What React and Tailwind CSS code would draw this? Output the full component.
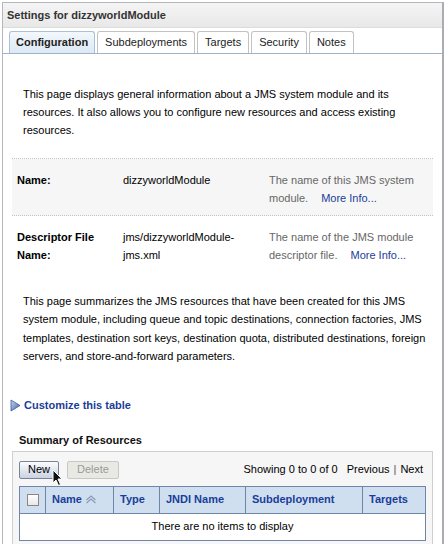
export default function App() {
  const tabs = ["Configuration", "Subdeployments", "Targets", "Security", "Notes"];
  const cols = [
    { label: "Name", w: "w-[68px]", sort: true },
    { label: "Type", w: "w-[46px]" },
    { label: "JNDI Name", w: "w-[86px]" },
    { label: "Subdeployment", w: "w-[117px]" },
    { label: "Targets", w: "flex-1" },
  ];

  return (
    <div className="w-[447px] h-[544px] overflow-hidden bg-white text-[11px] text-black" style={{ fontFamily: '"Liberation Sans", Arial, sans-serif' }}>
      <div className="ml-[2px] mt-[2px] w-[442px] h-[560px] border border-[#b4b8bd] border-r-2 border-r-[#a9adb3] bg-white">
        {/* header */}
        <div className="h-[25px] bg-gradient-to-b from-[#f4f4f4] to-[#e8e8e8] border-b border-[#dcdcdc] flex items-center pl-[4px]">
          <span className="font-bold text-[11px] text-[#333]">Settings for dizzyworldModule</span>
        </div>

        {/* tabs */}
        <div className="flex items-end pl-[6px] mt-[2px] h-[24px] border-b border-[#9fb3c8]">
          {tabs.map((t, i) => (
            <div
              key={t}
              className={
                i === 0
                  ? "h-[22px] px-[6px] mr-[2px] flex items-center rounded-t-[3px] border border-b-0 border-[#a9c0d6] bg-gradient-to-b from-[#f3f8fc] to-[#dce9f4] font-bold text-[11px] text-[#222]"
                  : "h-[22px] px-[7px] mr-[2px] flex items-center rounded-t-[3px] border border-b-0 border-[#c2c2c2] bg-white text-[11px] text-[#222]"
              }
            >
              {t}
            </div>
          ))}
        </div>

        {/* intro */}
        <div className="pl-[20px] pr-[12px] pt-[31px] leading-[18px] text-[11px]">
          This page displays general information about a JMS system module and its resources. It also allows you to configure new resources and access existing resources.
        </div>

        {/* properties */}
        <div className="mx-[9px] mt-[19px] border-t border-dotted border-[#c4c4c4]">
          <div className="flex bg-[#f6f6f6] pt-[12px] pb-[8px] leading-[18px] border-b border-dotted border-[#c4c4c4]">
            <div className="w-[111px] pl-[5px] font-bold">Name:</div>
            <div className="w-[146px]">dizzyworldModule</div>
            <div className="flex-1 text-[#666]">
              <div>The name of this JMS system</div>
              <div>
                module.<span className="ml-[13px] text-[#1a3d99]">More Info...</span>
              </div>
            </div>
          </div>
          <div className="flex pt-[12px] pb-[10px] leading-[18px]">
            <div className="w-[111px] pl-[5px] font-bold">Descriptor File Name:</div>
            <div className="w-[146px] pr-[30px]">jms/dizzyworldModule-jms.xml</div>
            <div className="flex-1 text-[#666]">
              <div>The name of the JMS module</div>
              <div>
                descriptor file.<span className="ml-[13px] text-[#1a3d99]">More Info...</span>
              </div>
            </div>
          </div>
        </div>

        {/* summary text */}
        <div className="pl-[20px] pr-[12px] pt-[18px] leading-[18.3px] text-[11px]">
          This page summarizes the JMS resources that have been created for this JMS system module, including queue and topic destinations, connection factories, JMS templates, destination sort keys, destination quota, distributed destinations, foreign servers, and store-and-forward parameters.
        </div>

        {/* customize */}
        <div className="flex items-center pl-[7px] mt-[32px] h-[16px]">
          <svg width="11" height="13" viewBox="0 0 11 13" className="mr-[3px]">
            <defs>
              <linearGradient id="tri" x1="0" y1="0" x2="1" y2="1">
                <stop offset="0" stopColor="#c8d8f0" />
                <stop offset="1" stopColor="#3a5fa8" />
              </linearGradient>
            </defs>
            <path d="M1 1 L10 6.5 L1 12 Z" fill="url(#tri)" stroke="#3b5a9a" strokeWidth="0.8" />
          </svg>
          <span className="font-bold text-[#1a3d99] text-[11px]">Customize this table</span>
        </div>

        {/* summary of resources */}
        <div className="pl-[16px] mt-[19px] font-bold text-[11px] text-[#111]">Summary of Resources</div>
        <div className="mx-[9px] mt-[2px] border border-[#cfcfcf] bg-[#f6f6f6] pt-[8px] px-[6px] h-[120px]">
          <div className="flex items-center h-[20px]">
            <div className="relative">
              <div className="h-[18px] px-[8px] flex items-center border border-[#7a8494] rounded-[2px] bg-gradient-to-b from-[#fbfcfe] to-[#c9d3e2] text-[11px]">New</div>
              <svg width="12" height="18" viewBox="0 0 12 18" className="absolute left-[33px] top-[8px]">
                <path d="M1 1 L1 14 L4 11 L6.5 16.5 L8.5 15.5 L6 10 L10 10 Z" fill="#111" stroke="#fff" strokeWidth="1" />
              </svg>
            </div>
            <div className="ml-[8px] h-[18px] px-[9px] flex items-center border border-[#c8c8c8] rounded-[2px] bg-[#e9e9e3] text-[#999] text-[11px]">Delete</div>
            <div className="ml-auto pr-[3px] text-[11px]">
              Showing 0 to 0 of 0<span className="ml-[9px]">Previous</span>
              <span className="mx-[4px] text-[#555]">|</span>Next
            </div>
          </div>
          <div className="mt-[6px] border border-[#6f86a8] bg-white">
            <div className="flex h-[27px] bg-[#cfdff0] border-b border-[#6f86a8]">
              <div className="w-[26px] flex items-center justify-center border-r border-[#6f86a8]">
                <div className="w-[12px] h-[12px] border border-[#888] bg-gradient-to-b from-white to-[#e8e8e8]" />
              </div>
              {cols.map((c, i) => (
                <div
                  key={c.label}
                  className={`${c.w} flex items-center pl-[6px] font-bold text-[#1a3d99] text-[11px] ${i < cols.length - 1 ? "border-r border-[#6f86a8]" : ""}`}
                >
                  {c.label}
                  {c.sort && (
                    <svg width="12" height="9" viewBox="0 0 12 9" className="ml-[3px]">
                      <path d="M1.5 5 L6 1 L10.5 5 M1.5 8 L6 4 L10.5 8" fill="none" stroke="#8a9bb5" strokeWidth="1.2" />
                    </svg>
                  )}
                </div>
              ))}
            </div>
            <div className="h-[26px] flex items-center justify-center text-[11px]">There are no items to display</div>
          </div>
        </div>
      </div>
    </div>
  );
}
